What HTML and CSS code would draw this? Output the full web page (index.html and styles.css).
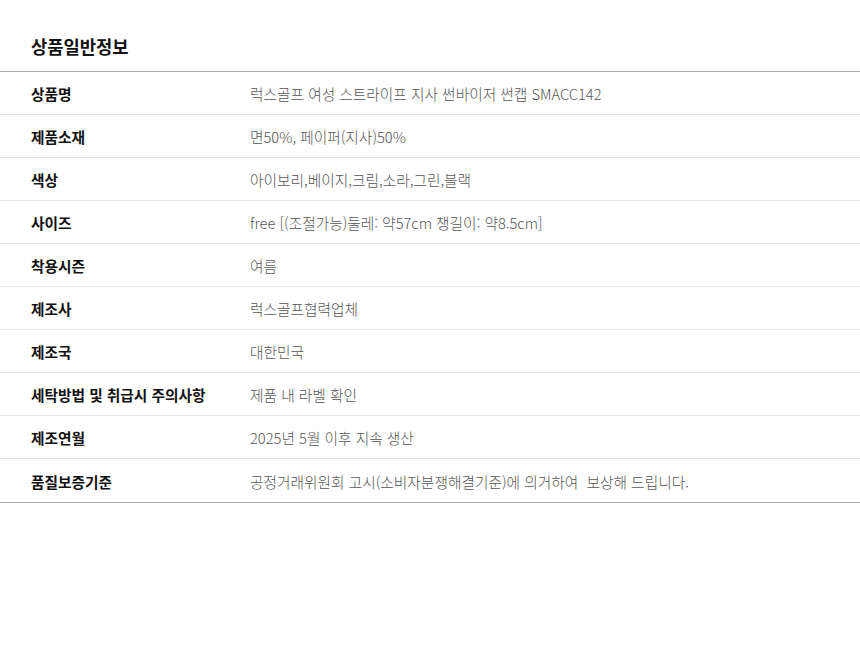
FILE: index.html
```html
<!DOCTYPE html>
<html lang="ko">
<head>
<meta charset="utf-8">
<link rel="stylesheet" href="styles.css">
</head>
<body>
<div class="wrap">
  <h2 class="title">상품일반정보</h2>
  <table class="info">
    <tr><th>상품명</th><td>럭스골프 여성 스트라이프 지사 썬바이저 썬캡 SMACC142</td></tr>
    <tr><th>제품소재</th><td>면50%, 페이퍼(지사)50%</td></tr>
    <tr><th>색상</th><td>아이보리,베이지,크림,소라,그린,블랙</td></tr>
    <tr><th>사이즈</th><td>free [(조절가능)둘레: 약57cm 챙길이: 약8.5cm]</td></tr>
    <tr><th>착용시즌</th><td>여름</td></tr>
    <tr><th>제조사</th><td>럭스골프협력업체</td></tr>
    <tr><th>제조국</th><td>대한민국</td></tr>
    <tr><th>세탁방법 및 취급시 주의사항</th><td>제품 내 라벨 확인</td></tr>
    <tr><th>제조연월</th><td>2025년 5월 이후 지속 생산</td></tr>
    <tr class="last"><th>품질보증기준</th><td>공정거래위원회 고시(소비자분쟁해결기준)에 의거하여&nbsp; 보상해 드립니다.</td></tr>
  </table>
</div>
</body>
</html>
```
FILE: styles.css
```css
html, body {
  margin: 0;
  padding: 0;
  background: #fff;
}
body {
  font-family: "Noto Sans CJK KR", "Noto Sans", sans-serif;
  color: #222;
}
.wrap {
  width: 860px;
}
.title {
  margin: 0;
  height: 71px;
  box-sizing: border-box;
  padding: 33px 0 0 31px;
  font-size: 17.7px;
  font-weight: 700;
  line-height: 26px;
  color: #111;
}
.info {
  width: 100%;
  border-collapse: collapse;
  border-top: 1px solid #aaa;
  border-bottom: 1px solid #aaa;
}
.info tr {
  border-top: 1px solid #e2e2e2;
}
.info tr:first-child {
  border-top: none;
}
.info th, .info td {
  height: 40px;
  padding: 2px 0 0;
  text-align: left;
  vertical-align: middle;
  font-size: 14.7px;
  line-height: 20px;
}
.info .last th, .info .last td {
  height: 41px;
}
.info th {
  width: 219px;
  padding-left: 31px;
  font-weight: 700;
  color: #111;
}
.info td {
  font-weight: 300;
  color: #555;
}
```
